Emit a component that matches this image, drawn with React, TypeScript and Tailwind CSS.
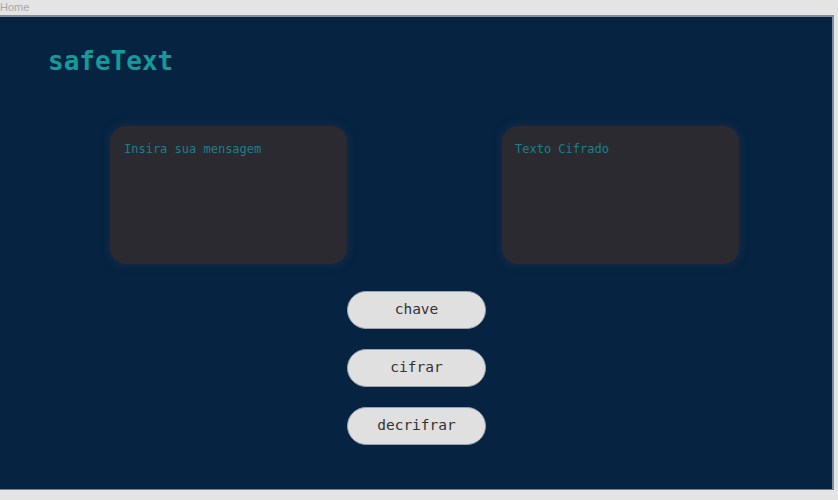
import React from "react";

const mono = { fontFamily: '"DejaVu Sans Mono", "Liberation Mono", monospace' };

export default function App() {
  return (
    <div className="w-[838px] h-[500px] bg-[#e4e4e4] flex flex-col overflow-hidden" style={mono}>
      <div className="h-[15px] flex items-center pl-0">
        <span className="text-[11px] leading-none text-[#a8a8a8]" style={{ fontFamily: '"Liberation Sans", Arial, sans-serif' }}>Home</span>
      </div>
      <div className="w-[834px] h-[475px] bg-[#062441] border-t-2 border-r-2 border-[#7f8fa0] border-b border-b-[#6f8198] flex flex-col">
        <h1 className="pl-[48px] mt-[28px] text-[26px] leading-[32px] font-bold text-[#139a9a]">safeText</h1>
        <div className="flex mt-[49px] pl-[110px] gap-[155px]">
          <div className="w-[237px] h-[138px] rounded-[16px] bg-[#2b2a30] shadow-[0_0_8px_rgba(40,50,80,0.7)] px-[14px] pt-[10px]">
            <span className="text-[12px] leading-[16px] font-medium text-[#1a8088]">Insira sua mensagem</span>
          </div>
          <div className="w-[237px] h-[138px] rounded-[16px] bg-[#2b2a30] shadow-[0_0_8px_rgba(40,50,80,0.7)] px-[13px] pt-[10px]">
            <span className="text-[12px] leading-[16px] font-medium text-[#1a8088]">Texto Cifrado</span>
          </div>
        </div>
        <div className="flex flex-col ml-[347px] mt-[27px] gap-[20px]">
          {["chave", "cifrar", "decrifrar"].map((t) => (
            <button
              key={t}
              className="w-[139px] h-[38px] rounded-full bg-[#e0e0e0] border border-[#9aa3ad] text-[14.5px] text-[#333333] flex items-center justify-center"
              style={mono}
            >
              {t}
            </button>
          ))}
        </div>
      </div>
    </div>
  );
}
